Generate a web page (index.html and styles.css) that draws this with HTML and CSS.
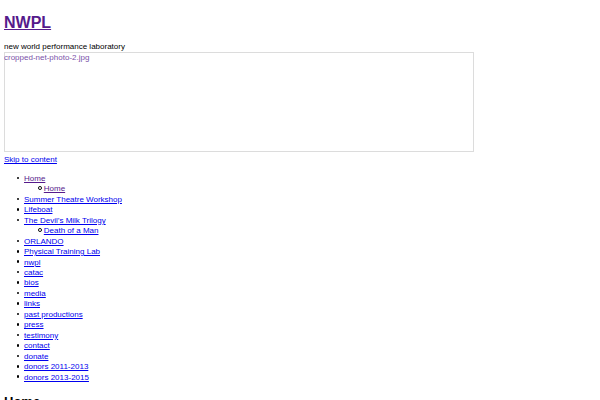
FILE: index.html
```html
<!DOCTYPE html>
<html>
<head>
<meta charset="utf-8">
<link rel="stylesheet" href="styles.css">
</head>
<body>
<header class="site-header">
  <h1 class="site-title"><a class="visited" href="#">NWPL</a></h1>
  <p class="site-desc">new world performance laboratory</p>
  <div class="header-image"><a class="alt" href="#">cropped-net-photo-2.jpg</a></div>
  <a class="skip" href="#">Skip to content</a>
</header>
<nav class="menu">
  <ul>
    <li><a class="visited" href="#">Home</a>
      <ul class="sub"><li><a class="visited" href="#">Home</a></li></ul>
    </li>
    <li><a href="#">Summer Theatre Workshop</a></li>
    <li><a href="#">Lifeboat</a></li>
    <li><a href="#">The Devil’s Milk Trilogy</a>
      <ul class="sub"><li><a href="#">Death of a Man</a></li></ul>
    </li>
    <li><a href="#">ORLANDO</a></li>
    <li><a href="#">Physical Training Lab</a></li>
    <li><a href="#">nwpl</a></li>
    <li><a href="#">catac</a></li>
    <li><a href="#">bios</a></li>
    <li><a href="#">media</a></li>
    <li><a href="#">links</a></li>
    <li><a href="#">past productions</a></li>
    <li><a href="#">press</a></li>
    <li><a href="#">testimony</a></li>
    <li><a href="#">contact</a></li>
    <li><a href="#">donate</a></li>
    <li><a href="#">donors 2011-2013</a></li>
    <li><a href="#">donors 2013-2015</a></li>
  </ul>
</nav>
<main>
  <h2 class="page-title">Home</h2>
</main>
</body>
</html>
```
FILE: styles.css
```css
body {
  margin: 4px;
  font-family: "Liberation Sans", Arial, sans-serif;
  font-size: 8px;
  line-height: 10.45px;
  color: #000;
  background: #fff;
}
a { color: #0000ee; }
a.visited { color: #551a8b; }
.site-title {
  margin: 9px 0 0;
  font-size: 16px;
  line-height: 19px;
  font-weight: bold;
}
.site-desc {
  margin: 10px 0 0;
}
.header-image {
  width: 468px;
  height: 98px;
  border: 1px solid #dcdcdc;
}
.alt {
  color: #7a52a8;
  text-decoration: none;
  display: block;
  margin-left: -1px;
}
.skip {
  display: inline-block;
  margin-top: 3px;
}
.menu ul {
  margin: 8px 0 0;
  padding-left: 20px;
  list-style: none;
}
.menu ul.sub {
  margin: 0;
}
.menu li::before {
  content: "";
  display: inline-block;
  width: 2.6px;
  height: 2.6px;
  border-radius: 50%;
  background: #000;
  margin-left: -7.3px;
  margin-right: 4.7px;
  vertical-align: 1.5px;
}
.menu ul.sub li::before {
  width: 1.8px;
  height: 1.8px;
  background: transparent;
  border: 0.6px solid #000;
  margin-left: -6px;
  margin-right: 2px;
}
.page-title {
  margin: 11px 0 0;
  font-size: 13px;
  line-height: 15px;
  font-weight: bold;
}
```
